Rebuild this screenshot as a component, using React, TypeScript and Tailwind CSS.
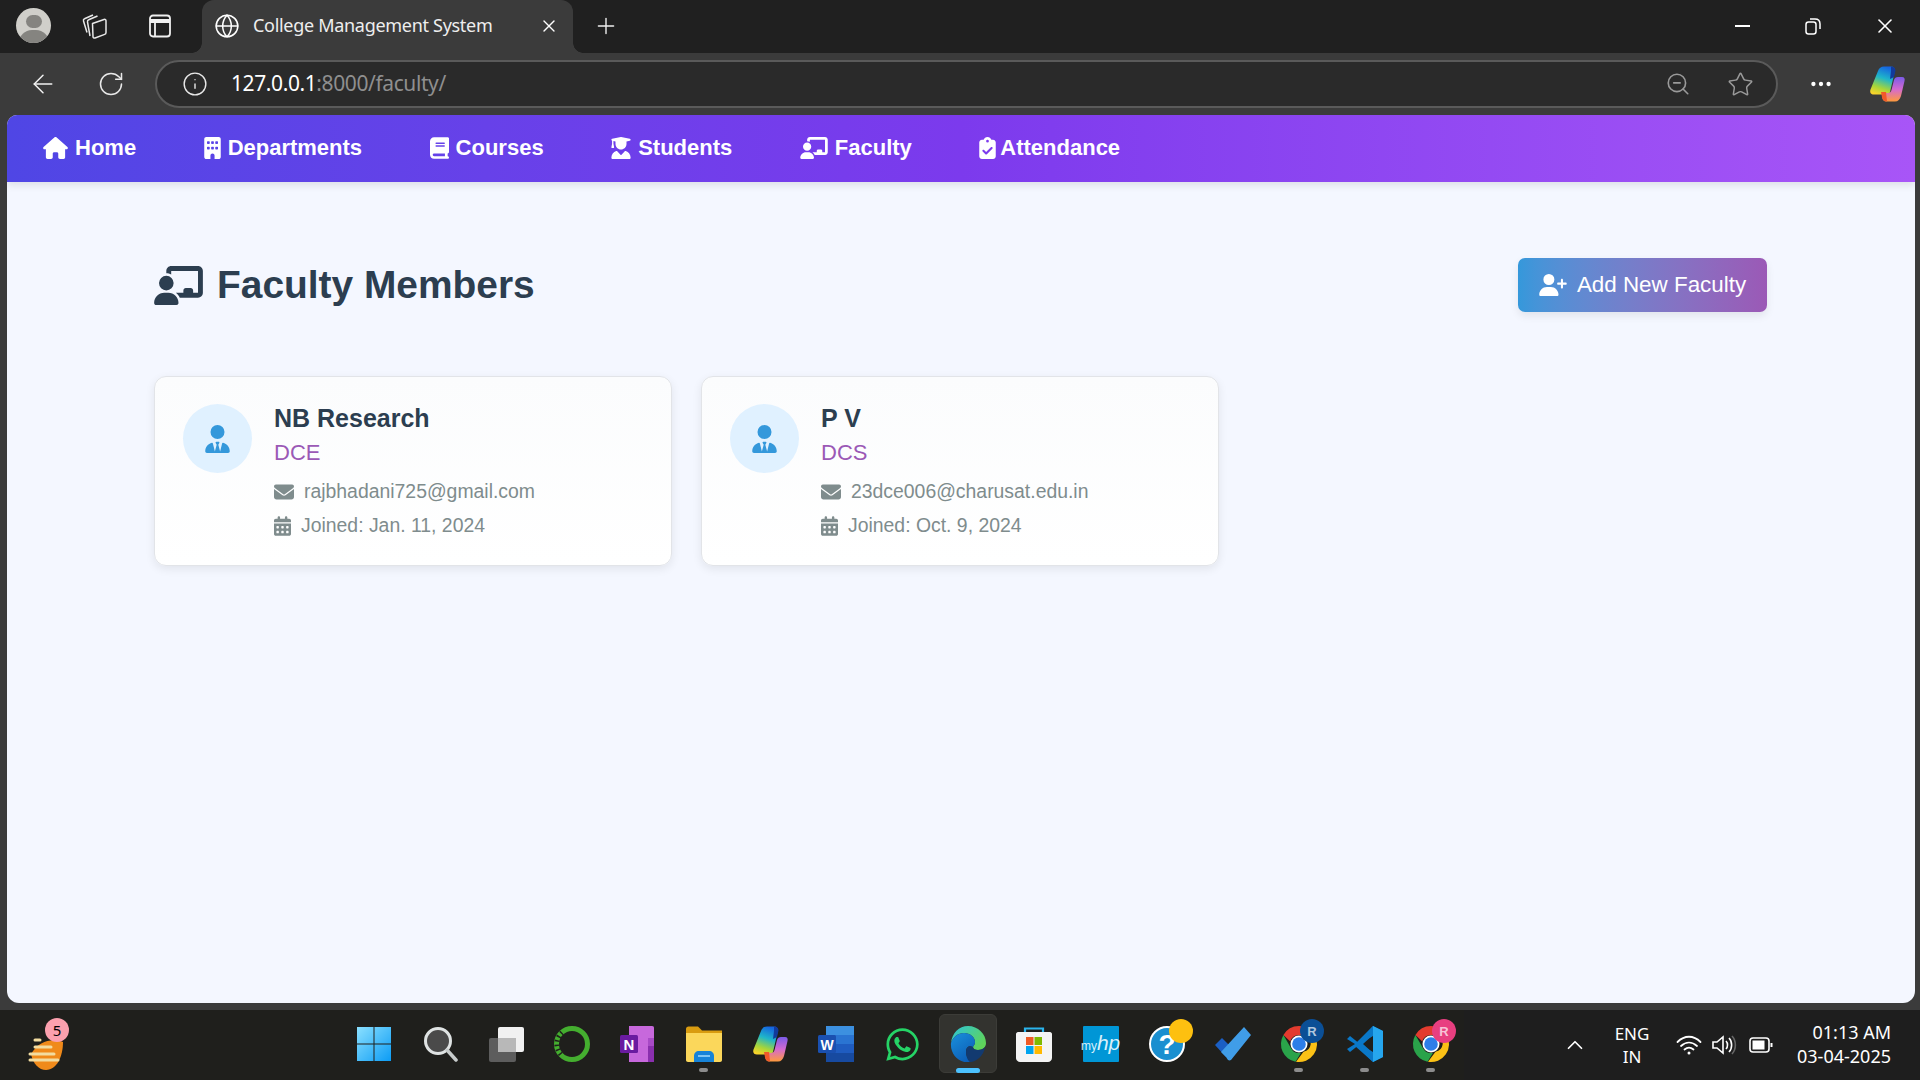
import { ArrowLeft, ChevronUp, Globe, Info, MoreHorizontal, Plus, RotateCw, Star, X, ZoomOut } from "lucide-react";
import { FaBook, FaBuilding, FaCalendarDays, FaChalkboardUser, FaClipboardCheck, FaEnvelope, FaHouse, FaUserGraduate, FaUserPlus, FaUserTie, FaWhatsapp } from "react-icons/fa6";

const navItems = [
  { label: "Home", icon: FaHouse, iconClass: "w-[25px] h-[22px]", gap: "gap-[7px]" },
  { label: "Departments", icon: FaBuilding, iconClass: "w-[17px] h-[22px]", gap: "gap-[7px]" },
  { label: "Courses", icon: FaBook, iconClass: "w-[19px] h-[22px]", gap: "gap-[7px]" },
  { label: "Students", icon: FaUserGraduate, iconClass: "w-[20px] h-[22px]", gap: "gap-[7px]" },
  { label: "Faculty", icon: FaChalkboardUser, iconClass: "w-[28px] h-[22px]", gap: "gap-[7px]" },
  { label: "Attendance", icon: FaClipboardCheck, iconClass: "w-[17px] h-[22px]", gap: "gap-[4px]" },
];

const faculty = [
  { name: "NB Research", dept: "DCE", email: "rajbhadani725@gmail.com", joined: "Joined: Jan. 11, 2024" },
  { name: "P V", dept: "DCS", email: "23dce006@charusat.edu.in", joined: "Joined: Oct. 9, 2024" },
];

function CopilotLogo({ id, size }: { id: string; size: number }) {
  return (
    <svg width={size} height={size} viewBox="0 0 36 36">
      <defs>
        <linearGradient id={`${id}-a`} x1="0.6" y1="0" x2="0.3" y2="1">
          <stop offset="0" stopColor="#1565e0" />
          <stop offset="0.4" stopColor="#1fb6c9" />
          <stop offset="0.75" stopColor="#a6d53a" />
          <stop offset="1" stopColor="#f8d32a" />
        </linearGradient>
        <linearGradient id={`${id}-b`} x1="0.5" y1="0" x2="0.5" y2="1">
          <stop offset="0" stopColor="#7b5be8" />
          <stop offset="0.5" stopColor="#d46ad0" />
          <stop offset="1" stopColor="#ff9a3c" />
        </linearGradient>
      </defs>
      <path d="M9 5c1-3 3-4.500 6-4.500h7c3 0 4 2 4 4L21 26c-.5 2-2 2.500-4 2.500H5c-3 0-4.500-2-3.500-5z" fill={`url(#${id}-a)`} />
      <path d="M13 27h6c2 0 3-1 3.500-3L25 14c.5-2 2-3 4-3h4c2.500 0 3 2 2.500 4l-3.500 15c-1 3.500-3 5.500-6 5.500h-9c-3.500 0-4-4-4-8.500z" fill={`url(#${id}-b)`} />
      <path d="M22 .5c3 0 4.500 2 4.500 4L25 11l-4 2 1-8z" fill="#123a9c" />
      <path d="M12 26h5l1 9.500c-3 0-4.500-2-5-4z" fill="#f1592a" />
    </svg>
  );
}

function StartIcon() {
  return (
    <svg width="36" height="36" viewBox="0 0 36 36">
      <defs>
        <linearGradient id="startg" x1="0" y1="0" x2="1" y2="1">
          <stop offset="0" stopColor="#8be0ff" />
          <stop offset="1" stopColor="#0c9cf5" />
        </linearGradient>
      </defs>
      <path d="M1 1h16.500v16.500H1zM18.500 1H35v16.500H18.500zM1 18.500h16.500V35H1zM18.500 18.500H35V35H18.500z" fill="url(#startg)" />
    </svg>
  );
}

function SearchIcon() {
  return (
    <svg width="36" height="36" viewBox="0 0 36 36" className="ml-[2px]">
      <circle cx="15" cy="15" r="12.500" fill="#4a4a4a" stroke="#dfe3e3" strokeWidth="3" />
      <path d="M24 24l9 10" stroke="#c8cccc" strokeWidth="3.500" strokeLinecap="round" />
    </svg>
  );
}

function TaskViewIcon() {
  return (
    <svg width="36" height="36" viewBox="0 0 36 36">
      <rect x="1" y="12" width="27" height="24" rx="2" fill="#5d5d5d" />
      <rect x="10" y="1" width="26" height="25" rx="2" fill="#f1f1f1" />
      <rect x="10" y="12" width="18" height="14" fill="#b8b8b8" />
    </svg>
  );
}

function RingIcon() {
  return (
    <svg width="36" height="36" viewBox="0 0 36 36">
      <circle cx="18" cy="18" r="15.500" fill="none" stroke="#44ae2f" strokeWidth="5" />
      <path d="M8 6.500A15.500 15.500 0 0 0 8 29.500" fill="none" stroke="#1f1f1c" strokeWidth="5" strokeDasharray="1.500 3" />
    </svg>
  );
}

function OneNoteIcon() {
  return (
    <svg width="36" height="36" viewBox="0 0 36 36">
      <path d="M9 0h23c1.500 0 2 .8 2 2v32c0 1.200-.5 2-2 2H9z" fill="#c768dc" />
      <rect x="28" y="12" width="6" height="24" fill="#8a2fae" />
      <rect x="28" y="12" width="6" height="8" fill="#a84ac6" />
      <rect x="0" y="9" width="18" height="18" rx="1.500" fill="#6a1ba0" />
      <text x="9" y="23.500" fill="#fff" fontSize="15" fontWeight="700" textAnchor="middle" fontFamily="'Liberation Sans', sans-serif">N</text>
    </svg>
  );
}

function FolderIcon() {
  return (
    <svg width="36" height="36" viewBox="0 0 36 36">
      <path d="M0 3c0-1.500 1-2.500 2.500-2.500H12l4 4h20V9H0z" fill="#d99c10" />
      <path d="M0 7h36v27c0 1.200-.8 2-2 2H2c-1.200 0-2-.8-2-2z" fill="#fbd75b" />
      <path d="M8 30c0-3 2-5 5-5h10c3 0 5 2 5 5v6H8z" fill="#1783d8" />
      <rect x="12" y="29" width="12" height="2" fill="#7ec5f4" />
    </svg>
  );
}

function WordIcon() {
  return (
    <svg width="36" height="36" viewBox="0 0 36 36">
      <path d="M8 0h26c1 0 2 1 2 2v32c0 1-1 2-2 2H8z" fill="#1f5cc0" />
      <rect x="8" y="0" width="28" height="9" fill="#3c90e0" />
      <rect x="8" y="9" width="28" height="9" fill="#2a74d2" />
      <rect x="8" y="27" width="28" height="9" fill="#174aa0" />
      <rect x="0" y="9" width="18" height="18" rx="1.500" fill="#1a50b0" />
      <text x="9" y="23.500" fill="#fff" fontSize="14" fontWeight="700" textAnchor="middle" fontFamily="'Liberation Sans', sans-serif">W</text>
    </svg>
  );
}

function EdgeIcon() {
  return (
    <svg width="36" height="36" viewBox="0 0 36 36">
      <defs>
        <linearGradient id="edgeg" x1="0" y1="0" x2="1" y2="0.6">
          <stop offset="0" stopColor="#2cc4dc" />
          <stop offset="1" stopColor="#5fd35a" />
        </linearGradient>
        <linearGradient id="edgeb" x1="0" y1="0" x2="0.6" y2="1">
          <stop offset="0" stopColor="#1a90dc" />
          <stop offset="1" stopColor="#0c5fb8" />
        </linearGradient>
      </defs>
      <path d="M1 17C2 7 9 0 18 0c10 0 18 8 18 17 0 4-3 7-8 7-3 0-5-1-5-3 0-1 2-2 2-5 0-5-5-9-11-9C8 7 3 11 1 17z" fill="url(#edgeg)" />
      <path d="M1 17c2-6 7-10 13-10 6 0 11 4 11 9 0 3-2 4-2 5-5-2-7 1-7 5 0 4 2 8 6 10-1 .3-3 .4-4 .4C8 36.400 0 28 1 17z" fill="url(#edgeb)" />
      <path d="M16 26c0-4 2-7 7-5 0 2 2 3 5 3 3 0 6-1 7-3-1 8-8 15-15 15-2-1-4-6-4-10z" fill="#123a70" />
    </svg>
  );
}

function StoreIcon() {
  return (
    <svg width="36" height="36" viewBox="0 0 36 36">
      <path d="M9 7V2.500h18V7" fill="none" stroke="#2ab4ec" strokeWidth="2.200" />
      <path d="M2 6h32c1 0 2 1 2 2v24c0 2-2 4-4 4H4c-2 0-4-2-4-4V8c0-1 1-2 2-2z" fill="#f4f4f4" />
      <rect x="10" y="11" width="7.500" height="8" fill="#ef5a24" />
      <rect x="18.500" y="11" width="7.500" height="8" fill="#7fba00" />
      <rect x="10" y="20" width="7.500" height="8" fill="#00a4ef" />
      <rect x="18.500" y="20" width="7.500" height="8" fill="#ffb900" />
    </svg>
  );
}

function HelpIcon() {
  return (
    <svg width="36" height="36" viewBox="0 0 36 36" className="overflow-visible">
      <circle cx="18" cy="18" r="17" fill="#1a8fd0" stroke="#fff" strokeWidth="2" />
      <text x="18" y="28" fill="#fff" fontSize="28" fontWeight="700" textAnchor="middle" fontFamily="'Liberation Sans', sans-serif">?</text>
      <circle cx="32" cy="5" r="12" fill="#fdc010" />
    </svg>
  );
}

function TodoIcon() {
  return (
    <svg width="36" height="36" viewBox="0 0 36 36">
      <path d="M0 19l7-7 9 9-5 10z" fill="#1b5fc4" />
      <path d="M11 31l-5-5L29 1l7 8-20 25c-2 1-3 .5-5-3z" fill="#409de8" />
    </svg>
  );
}

function ChromeIcon({ badge, color }: { badge: string; color: string }) {
  return (
    <svg width="36" height="36" viewBox="0 0 36 36" className="overflow-visible">
      <path d="M18 0a18 18 0 0 1 15.600 9H18a9 9 0 0 0-8.700 6.500L2.400 9A18 18 0 0 1 18 0z" fill="#e33b2e" />
      <path d="M2.400 9l7.800 13.500A9 9 0 0 0 20 26.800L14.500 35.700A18 18 0 0 1 2.400 9z" fill="#2aa34a" />
      <path d="M33.600 9A18 18 0 0 1 15 35.800l7.500-10A9 9 0 0 0 25 9z" fill="#fbc116" />
      <circle cx="18" cy="18" r="8.500" fill="#fff" />
      <circle cx="18" cy="18" r="6.800" fill="#2d7ee8" />
      <circle cx="31" cy="5" r="12" fill={color} />
      <text x="31" y="10" fontSize="13" fontWeight="700" fill="#ffffffb0" textAnchor="middle" fontFamily="'Liberation Sans', sans-serif">{badge}</text>
    </svg>
  );
}

function VsCodeIcon() {
  return (
    <svg width="36" height="36" viewBox="0 0 36 36">
      <path d="M26 0l10 5v26l-10 5-18-16z" fill="#0a78c8" />
      <path d="M26 0l10 5v26l-10 5z" fill="#26a6ee" />
      <path d="M26 10L12 18l14 8z" fill="#1f1f1c" />
      <path d="M3 10l-3 3 8 5-8 5 3 3 10-8z" fill="#0a78c8" />
      <path d="M26 0L8 18l18 18v-9L16 18l10-9z" fill="#0a78c8" />
    </svg>
  );
}

function WidgetIcon() {
  return (
    <div className="relative w-[40px] h-[44px]">
      <svg width="40" height="44" viewBox="0 0 40 44" className="absolute left-0 top-0">
        <path d="M3 26c8-14 22-16 32-12 0 14-6 28-17 28-7 0-13-6-15-16z" fill="#f08a1a" />
        <g stroke="#f2dca0" strokeWidth="3" strokeLinecap="round">
          <path d="M7 12h5M7 19h16M2 26h24M2 32h28M8 26h1" />
        </g>
      </svg>
      <div className="absolute left-[17px] top-[-10px] w-[24px] h-[24px] rounded-full bg-[#fba0ae] text-black text-[15px] flex items-center justify-center font-['Noto_Sans',sans-serif]">
        5
      </div>
    </div>
  );
}

const taskbarApps = [
  { key: "start", node: <StartIcon /> },
  { key: "search", node: <SearchIcon /> },
  { key: "taskview", node: <TaskViewIcon /> },
  { key: "ring", node: <RingIcon /> },
  { key: "onenote", node: <OneNoteIcon /> },
  { key: "explorer", node: <FolderIcon />, running: true },
  { key: "copilot", node: <CopilotLogo id="taskcopilot" size={36} /> },
  { key: "word", node: <WordIcon /> },
  { key: "whatsapp", node: <FaWhatsapp className="w-[37px] h-[37px] text-[#25d366]" /> },
  { key: "edge", node: <EdgeIcon />, active: true },
  { key: "store", node: <StoreIcon /> },
  {
    key: "myhp",
    node: (
      <div className="w-[36px] h-[36px] bg-[#0096d6] rounded-[1px] flex items-baseline justify-center pt-[5px] text-[#d8f0fb] text-[12px] font-['Liberation_Sans',sans-serif]">
        my<span className="italic text-[21px] leading-[24px]">hp</span>
      </div>
    ),
  },
  { key: "help", node: <HelpIcon /> },
  { key: "todo", node: <TodoIcon /> },
  { key: "chromeR", node: <ChromeIcon badge="R" color="#0b4f96" />, running: true },
  { key: "vscode", node: <VsCodeIcon />, running: true },
  { key: "chromeP", node: <ChromeIcon badge="R" color="#e83f80" />, running: true },
];

function BrowserChrome() {
  return (
    <div className="font-['Noto_Sans',sans-serif]">
      <div className="h-[53px] bg-[#202020] flex items-center pb-[2px] text-white">
        <div className="ml-[16px] w-[35px] h-[35px] rounded-full bg-[#d0cfca] overflow-hidden flex flex-col items-center">
          <div className="mt-[7px] w-[16px] h-[16px] rounded-full bg-[#858480]" />
          <div className="mt-[2px] w-[30px] h-[16px] rounded-t-full bg-[#858480]" />
        </div>
        <svg width="26" height="30" viewBox="0 0 26 30" className="ml-[31px]" fill="none" stroke="#e8e8e8" strokeWidth="1.500" strokeLinejoin="round">
          <path d="M5 21.500L1.500 10c-.3-1 0-1.800 1-2.200L11 4" />
          <path d="M8 25L5.500 11c-.2-1 .2-1.800 1.200-2.200L15.500 5" />
          <path d="M10.500 12.500L22 8.500c1.200-.4 2 .2 2 1.300v11.700c0 1-.4 1.600-1.300 1.900L13 27c-1 .3-2-.3-2-1.300z" />
        </svg>
        <svg width="22" height="24" viewBox="0 0 22 24" className="ml-[41px]" fill="none" stroke="#f0f0f0" strokeWidth="1.800">
          <rect x="1" y="1.500" width="20" height="21" rx="3" />
          <path d="M1 7h20" strokeWidth="4" />
          <path d="M6 7v15" />
        </svg>
        <div className="relative self-start ml-[31px] w-[371px] h-[53px] pb-[2px] bg-[#3b3b3b] rounded-t-[12px] flex items-center">
          <div className="absolute left-[-10px] bottom-0 w-[10px] h-[10px] bg-[radial-gradient(circle_at_0_0,#202020_9.500px,#3b3b3b_10px)]" />
          <div className="absolute right-[-10px] bottom-0 w-[10px] h-[10px] bg-[radial-gradient(circle_at_100%_0,#202020_9.500px,#3b3b3b_10px)]" />
          <Globe className="ml-[12px] w-[26px] h-[26px] text-white" strokeWidth={1.400} />
          <span className="ml-[13px] text-[18px] text-[#eeeeee] tracking-[-0.3px]">College Management System</span>
          <X className="ml-auto mr-[14px] w-[20px] h-[20px] text-white" strokeWidth={1.600} />
        </div>
        <Plus className="ml-[20px] w-[26px] h-[26px] text-[#eeeeee]" strokeWidth={1.300} />
        <div className="ml-auto flex items-center">
          <div className="w-[71px] flex justify-center">
            <div className="w-[15px] h-[2px] bg-white" />
          </div>
          <svg width="16" height="18" viewBox="0 0 16 18" className="ml-[27px]" fill="none" stroke="#fff" strokeWidth="1.500">
            <rect x="1" y="5" width="10" height="12" rx="2.500" />
            <path d="M5 2h5c3 0 5 2 5 5v5" />
          </svg>
          <X className="ml-[52px] mr-[23px] w-[24px] h-[24px] text-white" strokeWidth={1.600} />
        </div>
      </div>
      <div className="h-[62px] bg-[#3b3b3b] flex items-center">
        <ArrowLeft className="ml-[28px] w-[30px] h-[30px] text-[#f2f2f2]" strokeWidth={1.200} />
        <RotateCw className="ml-[39px] w-[28px] h-[28px] text-[#e8e8e8]" strokeWidth={1.300} />
        <div className="ml-[30px] w-[1623px] h-[48px] rounded-full bg-[#2a2a2a] border-2 border-[#5a5a5a] flex items-center">
          <Info className="ml-[25px] w-[26px] h-[26px] text-[#e8e8e8]" strokeWidth={1.300} />
          <span className="ml-[23px] text-[21px] text-white tracking-[-0.4px]">
            127.0.0.1<span className="text-[#8f8f8f]">:8000/faculty/</span>
          </span>
          <ZoomOut className="ml-auto w-[26px] h-[26px] text-[#9a9a9a]" strokeWidth={1.500} />
          <Star className="ml-[36px] mr-[22px] w-[27px] h-[27px] text-[#9a9a9a]" strokeWidth={1.300} />
        </div>
        <MoreHorizontal className="ml-[30px] w-[26px] h-[26px] text-white" strokeWidth={2} />
        <div className="ml-[35px]">
          <CopilotLogo id="barcopilot" size={36} />
        </div>
      </div>
    </div>
  );
}

function FacultyCard({ name, dept, email, joined }: { name: string; dept: string; email: string; joined: string }) {
  return (
    <div className="h-[190px] rounded-[12px] border border-[#e2e4e8] bg-gradient-to-b from-[#fbfcfd] to-white shadow-[0_3px_10px_rgba(0,0,0,0.08)] pl-[28px] pt-[27px] flex gap-[22px]">
      <div className="w-[69px] h-[69px] rounded-full bg-[#e0f1ff] flex items-center justify-center shrink-0">
        <FaUserTie className="w-[25px] h-[28px] text-[#3498db]" />
      </div>
      <div className="flex flex-col">
        <div className="mt-[-1px] h-[30px] leading-[30px] text-[25px] font-bold text-[#2c3e50]">{name}</div>
        <div className="mt-[5px] h-[30px] leading-[30px] text-[22px] text-[#9b59b6]">{dept}</div>
        <div className="mt-[9px] h-[30px] flex items-center gap-[10px] text-[19.400px] text-[#7f8c8d]">
          <FaEnvelope className="w-[20px] h-[20px]" />
          <span>{email}</span>
        </div>
        <div className="mt-[4px] h-[30px] flex items-center gap-[10px] text-[19.400px] text-[#7f8c8d]">
          <FaCalendarDays className="w-[17px] h-[20px]" />
          <span>{joined}</span>
        </div>
      </div>
    </div>
  );
}

export default function App() {
  return (
    <div className="w-[1920px] h-[1080px] overflow-hidden flex flex-col bg-[#3b3b3b] font-['Liberation_Sans',Arial,sans-serif]">
      <BrowserChrome />

      <div className="flex-1 pl-[7px] pr-[5px] pb-[7px] flex min-h-0">
        <div className="flex-1 rounded-t-[10px] rounded-b-[12px] overflow-hidden bg-[#f4f7ff] flex flex-col">
          <nav className="h-[67px] shrink-0 pl-[36px] pb-[2px] flex items-center gap-[67.500px] bg-gradient-to-r from-[#4f46e5] via-[#7c3aed] to-[#a855f7] shadow-[0_3px_8px_rgba(0,0,0,0.1)]">
            {navItems.map((item) => {
              const Icon = item.icon;
              return (
                <div key={item.label} className={`flex items-center ${item.gap} text-white text-[22px] font-bold`}>
                  <Icon className={item.iconClass} />
                  <span>{item.label}</span>
                </div>
              );
            })}
          </nav>

          <main className="pl-[147px] pr-[148px]">
            <div className="mt-[76px] h-[54px] flex items-center justify-between">
              <h1 className="flex items-center gap-[14px] text-[38.900px] font-bold text-[#2c3e50]">
                <FaChalkboardUser className="w-[49px] h-[39px]" />
                Faculty Members
              </h1>
              <button className="w-[249px] h-[54px] rounded-[7px] bg-gradient-to-r from-[#3498db] to-[#9b59b6] text-white text-[22.400px] flex items-center justify-center gap-[10px] shadow-[0_4px_8px_rgba(0,0,0,0.08)]">
                <FaUserPlus className="w-[28px] h-[22px]" />
                <span className="mb-[1px]">Add New Faculty</span>
              </button>
            </div>

            <div className="mt-[64px] grid grid-cols-[518px_518px_518px] gap-[29px]">
              {faculty.map((person) => (
                <FacultyCard key={person.name} {...person} />
              ))}
            </div>
          </main>
        </div>
      </div>

      <div className="h-[70px] shrink-0 bg-[#1f1f1c] flex items-center text-white font-['Noto_Sans',sans-serif]">
        <div className="w-[340.500px] pl-[28px] pt-[10px]">
          <WidgetIcon />
        </div>
        <div className="flex items-center">
          {taskbarApps.map((app) => (
            <div key={app.key} className="relative w-[66.100px] h-[70px] flex items-center justify-center">
              {app.active && (
                <div className="absolute left-[4px] top-[4px] w-[58px] h-[59px] rounded-[6px] bg-[#33332f] border border-[#3c3c38]" />
              )}
              <div className="relative mb-[2px]">{app.node}</div>
              {app.running && (
                <div className="absolute left-[28px] top-[58px] w-[9px] h-[4px] rounded-full bg-[#8c8c8c]" />
              )}
              {app.active && (
                <div className="absolute left-[21px] top-[58px] w-[24px] h-[5px] rounded-full bg-[#4cc2ff]" />
              )}
            </div>
          ))}
        </div>
        <div className="flex-1 flex items-center justify-end pr-[29px] bg-[#1e1e1e] h-full">
          <ChevronUp className="w-[26px] h-[26px] text-white" strokeWidth={1.600} />
          <div className="ml-[13px] mb-[1px] w-[62px] text-center text-[17px] leading-[23px]">
            <div>ENG</div>
            <div>IN</div>
          </div>
          <svg width="26" height="22" viewBox="0 0 26 22" className="ml-[13px]" fill="none" stroke="#fff" strokeWidth="1.800" strokeLinecap="round">
            <path d="M1.500 8c7-7 16-7 23 0M5 12c5-4.500 11-4.500 16 0M8.500 15.500c3-2.500 6-2.500 9 0" />
            <circle cx="13" cy="19" r="1.500" fill="#fff" stroke="none" />
          </svg>
          <svg width="26" height="22" viewBox="0 0 26 22" className="ml-[10px]" fill="none" stroke="#fff" strokeWidth="1.600">
            <path d="M1 8v6h4l6 5V3L5 8z" />
            <path d="M14 7c2 2 2 6 0 8M17 4c3.500 3.500 3.500 10.500 0 14" />
            <path d="M20 2c4.500 5 4.500 13 0 18" stroke="#666" />
          </svg>
          <svg width="24" height="16" viewBox="0 0 24 16" className="ml-[11px]" fill="none" stroke="#fff" strokeWidth="1.600">
            <rect x="1" y="1" width="19" height="14" rx="3" />
            <rect x="3.500" y="3.500" width="12" height="9" fill="#fff" stroke="none" />
            <path d="M22.500 6v4" strokeWidth="2" />
          </svg>
          <div className="mb-[3px] text-right text-[18px] leading-[24px] w-[118px]">
            <div>01:13 AM</div>
            <div>03-04-2025</div>
          </div>
        </div>
      </div>
    </div>
  );
}
